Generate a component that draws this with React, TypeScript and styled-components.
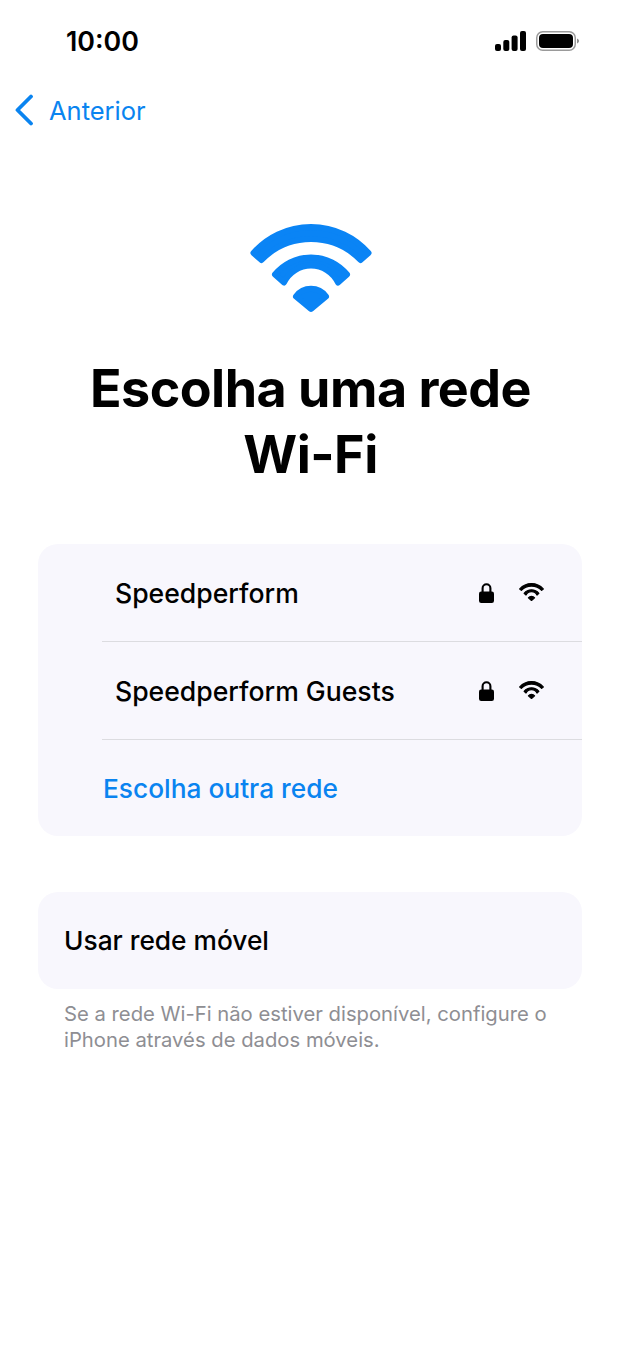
import React from "react";
import styled, { createGlobalStyle } from "styled-components";

const GlobalStyle = createGlobalStyle`
  html, body {
    margin: 0;
    padding: 0;
    background: #fff;
  }
  body {
    font-family: Inter, "Liberation Sans", sans-serif;
    color: #000;
  }
`;

const Screen = styled.div`
  width: 621px;
  height: 1346px;
  overflow: hidden;
  display: flex;
  flex-direction: column;
`;

const StatusBar = styled.div`
  height: 82px;
  padding: 0 42px 0 66px;
  display: flex;
  align-items: center;
  justify-content: space-between;
`;

const Clock = styled.div`
  font-size: 26.8px;
  font-weight: 600;
`;

const StatusIcons = styled.div`
  display: flex;
  align-items: center;
  gap: 10px;
`;

const Nav = styled.div`
  height: 56px;
  padding-left: 14px;
  display: flex;
  align-items: center;
  gap: 15px;
  color: #0a84f0;
  font-size: 25.5px;
`;

const HeroIcon = styled.div`
  margin-top: 86px;
  display: flex;
  justify-content: center;
`;

const Title = styled.h1`
  margin: 43px 0 0;
  text-align: center;
  font-size: 52px;
  line-height: 66px;
  font-weight: 700;
  letter-spacing: -0.5px;
`;

const Card = styled.div<{ $top: number }>`
  margin: ${(p) => p.$top}px 39px 0 38px;
  background: #f8f7fd;
  border-radius: 20px;
`;

const NetworkRow = styled.div<{ $divided?: boolean }>`
  height: 97px;
  margin-left: 64px;
  padding: 0 38px 0 13px;
  display: flex;
  align-items: center;
  justify-content: space-between;
  border-bottom: ${(p) => (p.$divided ? "1px solid #dcdce0" : "none")};
`;

const RowLabel = styled.div<{ $size: number }>`
  font-size: ${(p) => p.$size}px;
  font-weight: 500;
`;

const RowIcons = styled.div`
  display: flex;
  align-items: center;
  gap: 25px;
`;

const OtherNetwork = styled.div`
  height: 96px;
  padding-left: 65px;
  display: flex;
  align-items: center;
  color: #0a84f0;
  font-size: 26.3px;
  font-weight: 500;
`;

const MobileRow = styled.div`
  height: 97px;
  padding-left: 26px;
  display: flex;
  align-items: center;
`;

const Footnote = styled.p`
  margin: 12px 30px 0 64px;
  color: #8e8e93;
  font-size: 20.25px;
  line-height: 26px;
`;

function WifiIcon({ width, color }: { width: number; color: string }) {
  return (
    <svg
      width={width}
      height={(width * 89) / 122}
      viewBox="0 0 122 89"
      fill={color}
      stroke={color}
      strokeWidth="6"
      strokeLinejoin="round"
    >
      <path d="M3.5 29A76.6 76.6 0 0 1 118.5 29L110.5 36A68.8 68.8 0 0 0 11.5 36Z" />
      <path d="M25 50.5A46.5 46.5 0 0 1 97 50.5L88 58.5A30 30 0 0 0 34 58.5Z" />
      <path d="M46 72.5A18.5 18.5 0 0 1 76 72.5L61 85Z" />
    </svg>
  );
}

function LockIcon() {
  return (
    <svg width="15" height="20" viewBox="0 0 15 20">
      <path
        d="M3.6 9V5.2a3.9 3.9 0 0 1 7.8 0V9"
        fill="none"
        stroke="#000"
        strokeWidth="2.1"
      />
      <rect x="0" y="8.4" width="15" height="11.6" rx="2.2" fill="#000" />
    </svg>
  );
}

function SignalIcon() {
  return (
    <svg width="31" height="20" viewBox="0 0 31 20" fill="#000">
      <rect x="0" y="13" width="6" height="7" rx="2" />
      <rect x="8.3" y="9" width="6" height="11" rx="2" />
      <rect x="16.6" y="4.5" width="6" height="15.5" rx="2" />
      <rect x="25" y="0" width="6" height="20" rx="2" />
    </svg>
  );
}

function BatteryIcon() {
  return (
    <svg width="43" height="20" viewBox="0 0 43 20">
      <rect x="0.75" y="0.75" width="38.5" height="18.5" rx="6" fill="none" stroke="#9a9a9a" strokeWidth="1.5" />
      <rect x="3" y="3" width="34" height="14" rx="4" fill="#000" />
      <path d="M41 7.5c1.2.4 2 1.3 2 2.5s-.8 2.1-2 2.5Z" fill="#8e8e8e" />
    </svg>
  );
}

function BackChevron() {
  return (
    <svg width="20" height="32" viewBox="0 0 20 32" fill="none">
      <path
        d="M17 2.5 3.5 16 17 29.5"
        stroke="#0a84f0"
        strokeWidth="3.8"
        strokeLinecap="round"
        strokeLinejoin="round"
      />
    </svg>
  );
}

const networks = ["Speedperform", "Speedperform Guests"];

export default function App() {
  return (
    <Screen>
      <GlobalStyle />
      <StatusBar>
        <Clock>10:00</Clock>
        <StatusIcons>
          <SignalIcon />
          <BatteryIcon />
        </StatusIcons>
      </StatusBar>
      <Nav>
        <BackChevron />
        <span>Anterior</span>
      </Nav>
      <HeroIcon>
        <WifiIcon width={122} color="#0a84f5" />
      </HeroIcon>
      <Title>
        Escolha uma rede
        <br />
        Wi-Fi
      </Title>
      <Card $top={56}>
        {networks.map((name) => (
          <NetworkRow key={name} $divided>
            <RowLabel $size={26.6}>{name}</RowLabel>
            <RowIcons>
              <LockIcon />
              <WifiIcon width={25} color="#000" />
            </RowIcons>
          </NetworkRow>
        ))}
        <OtherNetwork>Escolha outra rede</OtherNetwork>
      </Card>
      <Card $top={56}>
        <MobileRow>
          <RowLabel $size={26.3}>Usar rede móvel</RowLabel>
        </MobileRow>
      </Card>
      <Footnote>
        Se a rede Wi-Fi não estiver disponível, configure o iPhone através de
        dados móveis.
      </Footnote>
    </Screen>
  );
}
